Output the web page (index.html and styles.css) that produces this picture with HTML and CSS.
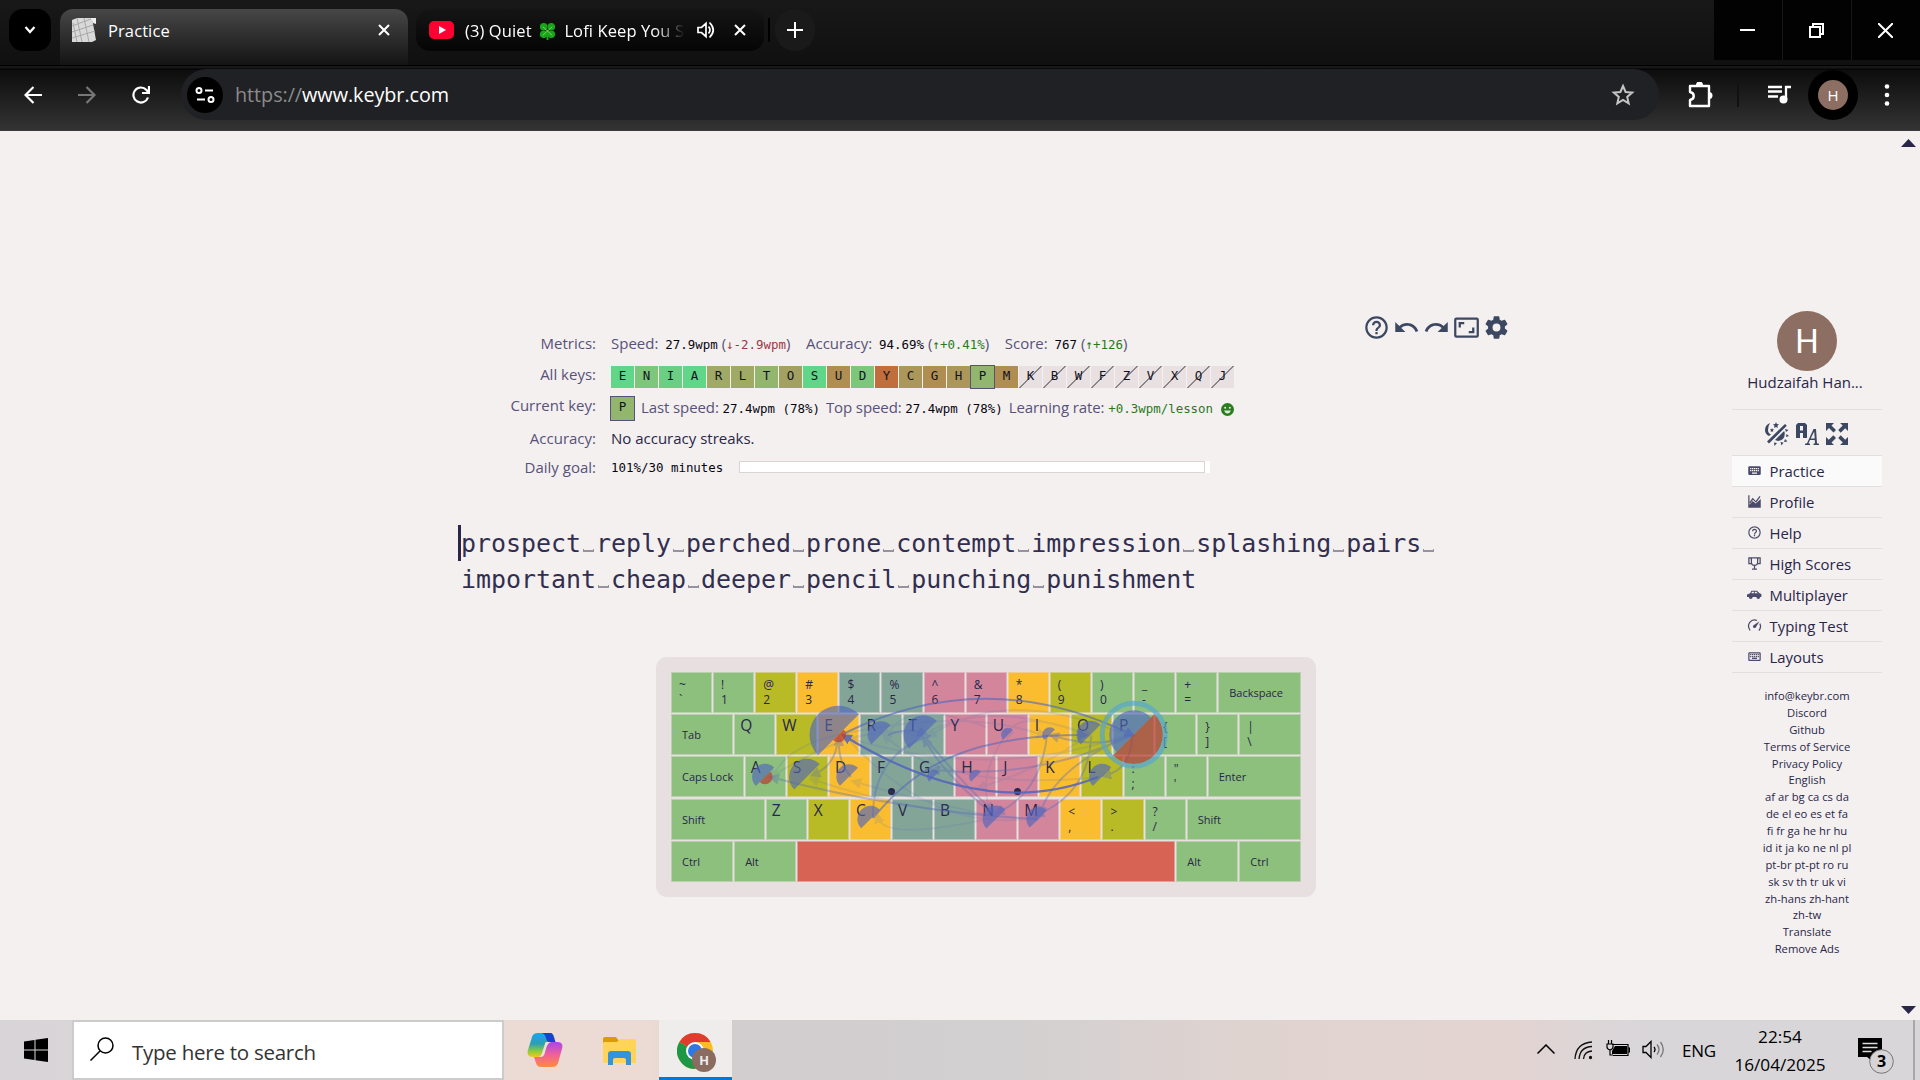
FILE: index.html
```html
<!DOCTYPE html>
<html lang="en">
<head>
<meta charset="utf-8">
<title>Practice</title>
<link rel="stylesheet" href="styles.css">
</head>
<body>
<div class="screen">
  <header class="tabstrip">
    <div class="tab-search"><svg width="14" height="14" viewBox="0 0 14 14"><path d="M2.500 4l4.500 5 4.500-5" fill="none" stroke="#fff" stroke-width="2.200"/></svg></div>
    <div class="tab active">
      <svg width="24" height="24" viewBox="0 0 24 24"><path d="M0 2L5 0H20L24 22 20 24H0Z" fill="#d9d9d9"/><path d="M0 8L19 1M0 14l21-7M0 20l23-7M5 0l5 24M12 0l5 24M1 5l4 19" stroke="#a8a8a8" stroke-width="1"/><path d="M19 0h5v6l-3-1z" fill="#eee"/></svg>
      <span class="tab-title">Practice</span>
      <svg class="close" width="12" height="12" viewBox="0 0 12 12"><path d="M1 1l10 10M11 1L1 11" stroke="#fff" stroke-width="2"/></svg>
    </div>
    <div class="tab other">
      <svg width="25" height="18" viewBox="0 0 25 18"><rect width="25" height="18" rx="5" fill="#ff0033"/><path d="M10 5l7 4-7 4z" fill="#fff"/></svg>
      <span class="tab-title lofi">(3) Quiet <svg width="19" height="19" viewBox="0 0 20 20"><g fill="#18a51c"><circle cx="6" cy="5" r="4"/><circle cx="14" cy="5" r="4"/><circle cx="6" cy="13" r="4"/><circle cx="14" cy="13" r="4"/><path d="M9 8h2v11H9z"/></g><path d="M5 5l10 9M15 5L5 14" stroke="#78d95a"/></svg> Lofi Keep You S</span>
      <svg class="speaker" width="18" height="18" viewBox="0 0 18 18" fill="none" stroke="#fff" stroke-width="1.700"><path d="M1 6.500h3.500L9 2.500v13l-4.500-4H1zM11.500 5.500q3 3.500 0 7M12.500 1.500q7.500 7.500 0 15"/></svg>
      <svg class="close" width="12" height="12" viewBox="0 0 12 12"><path d="M1 1l10 10M11 1L1 11" stroke="#fff" stroke-width="2"/></svg>
    </div>
    <i class="tab-sep"></i>
    <div class="new-tab"><svg width="16" height="16" viewBox="0 0 16 16"><path d="M8 0v16M0 8h16" stroke="#fff" stroke-width="2"/></svg></div>
    <div class="window-buttons">
      <div><svg width="15" height="15" viewBox="0 0 15 15"><path d="M0 7h15" stroke="#fff" stroke-width="2"/></svg></div>
      <div><svg width="15" height="15" viewBox="0 0 15 15" fill="none" stroke="#fff" stroke-width="2"><path d="M1 4h10v10H1zM4 4V1h10v10h-3"/></svg></div>
      <div><svg width="15" height="15" viewBox="0 0 15 15"><path d="M0 0l15 15M15 0L0 15" stroke="#fff" stroke-width="2"/></svg></div>
    </div>
  </header>

  <div class="toolbar">
    <svg class="nav" width="18" height="18" viewBox="0 0 18 18" fill="none" stroke="#fff" stroke-width="2.200"><path d="M18 9H2M9.500 1L1.500 9l8 8"/></svg>
    <svg class="nav" width="18" height="18" viewBox="0 0 18 18" fill="none" stroke="#777" stroke-width="2.200"><path d="M0 9h16M8.500 1l8 8-8 8"/></svg>
    <svg class="nav" width="18" height="18" viewBox="0 0 18 18" fill="none" stroke="#fff" stroke-width="2.200"><path d="M16 11.500A7.500 7.500 0 1 1 14.500 4l2 2.500M17 0v7h-7"/></svg>
    <div class="omnibox">
      <div class="site-info"><svg width="20" height="18" viewBox="0 0 20 18" fill="none" stroke="#fff" stroke-width="2"><circle cx="4" cy="4.500" r="2.500"/><path d="M10 4.500h8M2 13.500h8"/><circle cx="16" cy="13.500" r="2.500"/></svg></div>
      <span class="url"><span class="scheme">https://</span>www.keybr.com</span>
      <svg class="star" width="24" height="24" viewBox="0 0 24 24" fill="none" stroke="#c4c4c4" stroke-width="2"><path d="M12 3l2.600 6 6.600.600-5 4.300 1.500 6.500L12 17l-5.700 3.400 1.500-6.500-5-4.300L9.400 9z"/></svg>
    </div>
    <svg class="ext" width="26" height="26" viewBox="0 0 26 26"><path d="M3 4h19v20H3v-6c5-1 5-7 0-8z" fill="none" stroke="#fff" stroke-width="2.400" stroke-linejoin="round"/><path d="M9 3a3.500 3.500 0 0 1 7 0zM22 10a3.500 3.500 0 0 1 0 7z" fill="#fff"/></svg>
    <i class="bar-sep"></i>
    <svg class="media" width="24" height="19" viewBox="0 0 24 19"><path d="M0 2h14M0 6.500h14M0 11.500h10M23 2h-5v12" stroke="#fff" stroke-width="2.300" fill="none"/><circle cx="15.500" cy="14.500" r="4" fill="#fff"/></svg>
    <div class="profile"><span>H</span></div>
    <svg class="dots" width="6" height="24" viewBox="0 0 6 24" fill="#fff"><circle cx="3" cy="3.500" r="2.300"/><circle cx="3" cy="12" r="2.300"/><circle cx="3" cy="20.500" r="2.300"/></svg>
  </div>

  <main class="page">
    <section class="content">
      <div class="indicators">
        <div class="row metrics"><label>Metrics:</label><p>Speed: <b class="m1">27.9wpm</b><span class="par">(<b class="down">↓-2.9wpm</b>)</span></p><p class="second">Accuracy: <b class="m1">94.69%</b><span class="par">(<b class="up">↑+0.41%</b>)</span></p><p class="third">Score: <b class="m1">767</b><span class="par">(<b class="up">↑+126</b>)</span></p></div>
        <div class="row allkeys"><label>All keys:</label>
          <div class="tiles"><i class="k1">E</i><i class="k3">N</i><i class="k2">I</i><i class="k1">A</i><i class="k5">R</i><i class="k5">L</i><i class="k4">T</i><i class="k6">O</i><i class="k1">S</i><i class="k8">U</i><i class="k3">D</i><i class="k9">Y</i><i class="k7">C</i><i class="k8">G</i><i class="k7">H</i><i class="k4 sel">P</i><i class="k8">M</i><i class="off">K</i><i class="off">B</i><i class="off">W</i><i class="off">F</i><i class="off">Z</i><i class="off">V</i><i class="off">X</i><i class="off">Q</i><i class="off">J</i></div>
        </div>
        <div class="row current"><label>Current key:</label><i class="bigkey">P</i><p>Last speed: <b>27.4wpm (78%)</b></p><p class="top">Top speed: <b>27.4wpm (78%)</b></p><p class="rate">Learning rate: <b class="up">+0.3wpm/lesson</b></p>
          <svg class="smile" width="13" height="13" viewBox="0 0 13 13"><circle cx="6.500" cy="6.500" r="6.500" fill="#2a7d1f"/><circle cx="4.200" cy="4.800" r="1" fill="#f4f0ef"/><circle cx="8.800" cy="4.800" r="1" fill="#f4f0ef"/><path d="M3.200 7.500h6.600q-.8 3-3.300 3t-3.300-3z" fill="#dfe8dc"/></svg></div>
        <div class="row streak"><label>Accuracy:</label><p class="dark">No accuracy streaks.</p></div>
        <div class="row goal"><label>Daily goal:</label><b>101%/30 minutes</b><div class="meter"><div></div></div></div>
        <div class="controls">
          <svg viewBox="0 0 24 24"><path d="M11,18H13V16H11V18M12,2A10,10 0 0,0 2,12A10,10 0 0,0 12,22A10,10 0 0,0 22,12A10,10 0 0,0 12,2M12,20C7.59,20 4,16.41 4,12C4,7.59 7.59,4 12,4C16.41,4 20,7.59 20,12C20,16.41 16.41,20 12,20M12,6A4,4 0 0,0 8,10H10A2,2 0 0,1 12,8A2,2 0 0,1 14,10C14,12 11,11.75 11,15H13C13,12.75 16,12.5 16,10A4,4 0 0,0 12,6Z"/></svg>
          <svg viewBox="0 0 24 24"><path d="M12.5,8C9.85,8 7.45,9 5.6,10.6L2,7V16H11L7.38,12.38C8.77,11.22 10.54,10.5 12.5,10.5C16.04,10.5 19.05,12.81 20.1,16L22.47,15.22C21.08,11.03 17.15,8 12.5,8Z"/></svg>
          <svg viewBox="0 0 24 24"><path d="M18.4,10.6C16.55,9 14.15,8 11.5,8C6.85,8 2.92,11.03 1.54,15.22L3.9,16C4.95,12.81 7.95,10.5 11.5,10.5C13.45,10.5 15.23,11.22 16.62,12.38L13,16H22V7L18.4,10.6Z"/></svg>
          <svg viewBox="0 0 24 24"><path d="M19,12H17V15H14V17H19V12M7,9H10V7H5V12H7V9M21,3H3A2,2 0 0,0 1,5V19A2,2 0 0,0 3,21H21A2,2 0 0,0 23,19V5A2,2 0 0,0 21,3M21,19H3V5H21V19Z"/></svg>
          <svg viewBox="0 0 24 24"><path d="M12,15.5A3.5,3.5 0 0,1 8.5,12A3.5,3.5 0 0,1 12,8.5A3.5,3.5 0 0,1 15.5,12A3.5,3.5 0 0,1 12,15.5M19.43,12.97C19.47,12.65 19.5,12.33 19.5,12C19.5,11.67 19.47,11.34 19.43,11L21.54,9.37C21.73,9.22 21.78,8.95 21.66,8.73L19.66,5.27C19.54,5.05 19.27,4.96 19.05,5.05L16.56,6.05C16.04,5.66 15.5,5.32 14.87,5.07L14.5,2.42C14.46,2.18 14.25,2 14,2H10C9.75,2 9.54,2.18 9.5,2.42L9.13,5.07C8.5,5.32 7.96,5.66 7.44,6.05L4.95,5.05C4.73,4.96 4.46,5.05 4.34,5.27L2.34,8.73C2.21,8.95 2.27,9.22 2.46,9.37L4.57,11C4.53,11.34 4.5,11.67 4.5,12C4.5,12.33 4.53,12.65 4.57,12.97L2.46,14.63C2.27,14.78 2.21,15.05 2.34,15.27L4.34,18.73C4.46,18.95 4.73,19.03 4.95,18.95L7.44,17.94C7.96,18.34 8.5,18.68 9.13,18.93L9.5,21.58C9.54,21.82 9.75,22 10,22H14C14.25,22 14.46,21.82 14.5,21.58L14.87,18.93C15.5,18.67 16.04,18.34 16.56,17.94L19.05,18.95C19.27,19.03 19.54,18.95 19.66,18.73L21.66,15.27C21.78,15.05 21.73,14.78 21.54,14.63L19.43,12.97Z"/></svg>
        </div>
      </div>

      <div class="lesson"><i class="cursor"></i>
        <div>prospect<s></s>reply<s></s>perched<s></s>prone<s></s>contempt<s></s>impression<s></s>splashing<s></s>pairs<s></s></div>
        <div>important<s></s>cheap<s></s>deeper<s></s>pencil<s></s>punching<s></s>punishment</div>
      </div>

      <div class="keyboard">
        <div class="krow">
          <div class="key g two"><span>~</span><span>`</span></div><div class="key g two"><span>!</span><span>1</span></div><div class="key o two"><span>@</span><span>2</span></div><div class="key y two"><span>#</span><span>3</span></div><div class="key t two"><span>$</span><span>4</span></div><div class="key t two"><span>%</span><span>5</span></div><div class="key p two"><span>^</span><span>6</span></div><div class="key p two"><span>&amp;</span><span>7</span></div><div class="key y two"><span>*</span><span>8</span></div><div class="key o two"><span>(</span><span>9</span></div><div class="key g two"><span>)</span><span>0</span></div><div class="key g two"><span>_</span><span>-</span></div><div class="key g two"><span>+</span><span>=</span></div><div class="key g w200 mod">Backspace</div>
        </div>
        <div class="krow">
          <div class="key g w150 mod">Tab</div><div class="key g">Q</div><div class="key o">W</div><div class="key y">E</div><div class="key t">R</div><div class="key t">T</div><div class="key p">Y</div><div class="key p">U</div><div class="key y">I</div><div class="key o">O</div><div class="key g">P</div><div class="key g two"><span>{</span><span>[</span></div><div class="key g two"><span>}</span><span>]</span></div><div class="key g two w150"><span>|</span><span>\</span></div>
        </div>
        <div class="krow">
          <div class="key g w175 mod">Caps Lock</div><div class="key g">A</div><div class="key o">S</div><div class="key y">D</div><div class="key t home">F</div><div class="key t">G</div><div class="key p">H</div><div class="key p home">J</div><div class="key y">K</div><div class="key o">L</div><div class="key g two"><span>:</span><span>;</span></div><div class="key g two"><span>"</span><span>'</span></div><div class="key g w225 mod">Enter</div>
        </div>
        <div class="krow">
          <div class="key g w225 mod">Shift</div><div class="key g">Z</div><div class="key o">X</div><div class="key y">C</div><div class="key t">V</div><div class="key t">B</div><div class="key p">N</div><div class="key p">M</div><div class="key y two"><span>&lt;</span><span>,</span></div><div class="key o two"><span>&gt;</span><span>.</span></div><div class="key g two"><span>?</span><span>/</span></div><div class="key g w275 mod">Shift</div>
        </div>
        <div class="krow">
          <div class="key g w150 mod">Ctrl</div><div class="key g w150 mod">Alt</div><div class="key space w900"></div><div class="key g w150 mod">Alt</div><div class="key g w150 mod">Ctrl</div>
        </div>
        <svg class="heatmap" width="660" height="240" viewBox="0 0 660 240">
          <defs>
            <path id="half" d="M-.7071 .7071A1 1 0 0 1 .7071-.7071Z"/>
            <marker id="head" markerUnits="userSpaceOnUse" markerWidth="12" markerHeight="12" refX="5" refY="5.500" orient="auto"><path d="M0 0L11 5.500 0 11z" fill="#5166bd"/></marker>
          </defs>
          <g fill="none" stroke="#5166bd" stroke-width="2">
            <g opacity=".14">
              <path marker-end="url(#head)" d="M330 70Q250 40 232 78"/><path marker-end="url(#head)" d="M470 78Q350 28 275 78"/><path marker-end="url(#head)" d="M182 78Q130 90 118 118"/>
              <path marker-end="url(#head)" d="M445 120Q290 135 230 80"/><path marker-end="url(#head)" d="M340 160Q250 140 200 125"/><path marker-end="url(#head)" d="M340 160Q230 185 222 161"/>
              <path marker-end="url(#head)" d="M382 162Q270 160 158 123"/><path marker-end="url(#head)" d="M470 78Q340 125 196 82"/><path marker-end="url(#head)" d="M433 78Q360 50 352 78"/>
              <path marker-end="url(#head)" d="M267 78Q330 40 432 78"/><path marker-end="url(#head)" d="M182 78Q310 50 386 78"/><path marker-end="url(#head)" d="M115 120Q210 60 265 80"/>
              <path marker-end="url(#head)" d="M432 78Q390 110 325 130"/><path marker-end="url(#head)" d="M350 78Q320 120 335 155"/><path marker-end="url(#head)" d="M190 80Q280 180 382 160"/>
            </g>
            <g opacity=".34">
              <path marker-end="url(#head)" d="M217 161Q216 100 270 80"/><path marker-end="url(#head)" d="M382 162Q250 155 118 121"/>
              <path marker-end="url(#head)" d="M391 78Q385 135 343 155"/><path marker-end="url(#head)" d="M435 80Q433 135 383 157"/><path marker-end="url(#head)" d="M476 80Q475 112 450 118"/>
              <path marker-end="url(#head)" d="M474 78Q400 110 385 154"/><path marker-end="url(#head)" d="M340 160Q285 115 270 84"/><path marker-end="url(#head)" d="M267 78Q305 125 335 152"/>
              <path marker-end="url(#head)" d="M474 79Q380 123 279 113"/><path marker-end="url(#head)" d="M195 120Q182 105 183 84"/><path marker-end="url(#head)" d="M182 80Q181 107 159 117"/>
              <path marker-end="url(#head)" d="M232 78Q250 70 267 76"/><path marker-end="url(#head)" d="M476 79Q440 92 398 79"/>
            </g>
            <path opacity=".55" marker-end="url(#head)" d="M217 161C260 110 310 78 427 78"/>
            <path opacity=".6" marker-end="url(#head)" d="M189 76Q330 7 474 77"/>
            <path opacity=".85" stroke-width="2.300" marker-end="url(#head)" d="M442 120Q330 165 190 80"/>
          </g>
          <g fill="#5166bd" opacity=".64">
            <use href="#half" transform="translate(182.400 77.700)scale(29)"/><use href="#half" transform="translate(225 77.700)scale(13.500)"/><use href="#half" transform="translate(267 77.700)scale(19.500)"/>
            <use href="#half" transform="translate(352 77.700)scale(7)"/><use href="#half" transform="translate(393.700 77.700)scale(7.500)"/><use href="#half" transform="translate(434.500 77.700)scale(14)"/><use href="#half" transform="translate(477.700 77.700)scale(24.500)"/>
            <use href="#half" transform="translate(109 119.800)scale(13)"/><use href="#half" transform="translate(151 119.800)scale(18)"/><use href="#half" transform="translate(193 119.800)scale(12.700)"/><use href="#half" transform="translate(278 119.800)scale(7)"/><use href="#half" transform="translate(320 119.800)scale(7)"/><use href="#half" transform="translate(446 119.800)scale(13)"/>
            <use href="#half" transform="translate(214.500 162)scale(13.200)"/><use href="#half" transform="translate(340 162)scale(13.500)"/><use href="#half" transform="translate(382.300 162)scale(12)"/>
          </g>
          <g fill="#b83c36" opacity=".72"><use href="#half" transform="translate(182.400 77.700)rotate(180)scale(7.500)"/><use href="#half" transform="translate(109 119.800)rotate(180)scale(7.500)"/><use href="#half" transform="translate(477.700 77.700)rotate(180)scale(29.300)"/></g>
          <circle cx="477.700" cy="77.700" r="31.500" fill="none" stroke="#55a5d0" stroke-width="5" opacity=".68"/>
        </svg>
      </div>
    </section>

    <aside class="sidebar">
      <div class="avatar">H</div>
      <div class="user">Hudzaifah Han...</div>
      <div class="prefs">
        <svg viewBox="0 0 24 24"><path d="M5 1Q0 3 0 8q0 4 4 6l2-1.500Q3 11 3 8q0-4 2-7zM11 0l.8 2 2.200.3-1.600 1.500.4 2.200-1.800-1-1.900 1 .4-2.200L8 2.300l2.200-.3zM7 6l.5 1.300 1.500.2-1 1 .2 1.500L7 9.300l-1.300.7.2-1.500-1-1 1.500-.2zM20 2l1.800 1.800L4 21.500l-2-2zM19.500 9.500Q21 18 13 19l-3-1 8.500-8.500zM20 7l3.500 1-2.500 2zM21.500 12l2.500 2-3 1zM20 17l2.500 2.500-3.500.5zM15.500 20l1 3.500 2-3zM9 20.500l.5 3.500 2.500-3z"/></svg>
        <svg viewBox="0 0 24 24"><path fill-rule="evenodd" d="M1 16V3l2-2h7l2 2v13H8v-5H5v5zM5 4v4.500h3V4zM10 23v-1.200l2-.5L18.500 7H21l1 14.300 2 .5V23h-5.500v-1.200l1.500-.5-.3-3.300H15l-1.500 3.300 1.500.5V23zM15.700 16.500h4l-.5-7z"/></svg>
        <svg viewBox="0 0 24 24"><path d="M1 1h8L6.500 3.500l4.500 4.500-2.500 2.500L4 6 1 9zM23 1v8l-2.800-2.800-4.500 4.500L13.200 8l4.500-4.500L15 1zM1 23v-8l2.800 2.800 4.500-4.500L11 16l-4.500 4.500L9 23zM23 23h-8l2.800-2.500L13.200 16l2.500-2.700 4.500 4.500L23 15z"/></svg>
      </div>
      <nav class="menu">
        <a class="on"><svg viewBox="0 0 24 24"><path d="M19,10H17V8H19M19,13H17V11H19M16,10H14V8H16M16,13H14V11H16M16,17H8V15H16M7,10H5V8H7M7,13H5V11H7M8,11H10V13H8M8,8H10V10H8M11,11H13V13H11M11,8H13V10H11M20,5H4C2.89,5 2,5.89 2,7V17A2,2 0 0,0 4,19H20A2,2 0 0,0 22,17V7C22,5.89 21.1,5 20,5Z"/></svg>Practice</a>
        <a><svg viewBox="0 0 24 24"><path d="M2 2h2v15l5-6 5 4 8-7v14H2zM4 13l5-7 5 5 6-8 1.600 1.200L14.500 14 9.500 9 5 15z"/></svg>Profile</a>
        <a><svg viewBox="0 0 24 24"><path d="M11,18H13V16H11V18M12,2A10,10 0 0,0 2,12A10,10 0 0,0 12,22A10,10 0 0,0 22,12A10,10 0 0,0 12,2M12,20C7.59,20 4,16.41 4,12C4,7.59 7.59,4 12,4C16.41,4 20,7.59 20,12C20,16.41 16.41,20 12,20M12,6A4,4 0 0,0 8,10H10A2,2 0 0,1 12,8A2,2 0 0,1 14,10C14,12 11,11.75 11,15H13C13,12.75 16,12.5 16,10A4,4 0 0,0 12,6Z"/></svg>Help</a>
        <a><svg viewBox="0 0 24 24"><path fill="none" stroke="#4c4a6b" stroke-width="2" d="M7 3h10v7q0 5-5 5t-5-5zM7 5L6 3H3v9h5M17 5l1-2h3v9h-5M12 15v5M8 21h8"/></svg>High Scores</a>
        <a><svg viewBox="0 0 24 24"><path fill-rule="evenodd" d="M5 10l2-4h9l4 4 3 1v5h-2a3 3 0 0 1-6 0H9a3 3 0 0 1-6 0H0v-4zM8 7.500L7 10h4V7.500zM12.500 7.500V10H17l-2-2.500z"/></svg>Multiplayer</a>
        <a><svg viewBox="0 0 24 24"><path fill="none" stroke="#4c4a6b" stroke-width="2" d="M5 20Q0 13 4.500 7T16 4M20.500 9q3 6-1.500 11"/><path d="M20 5l-6 10a2.500 2.500 0 0 1-4-3z"/></svg>Typing Test</a>
        <a><svg viewBox="0 0 24 24"><path d="M4,5A2,2 0 0,0 2,7V17A2,2 0 0,0 4,19H20A2,2 0 0,0 22,17V7A2,2 0 0,0 20,5H4M4,7H20V17H4V7M5,8V10H7V8H5M8,8V10H10V8H8M11,8V10H13V8H11M14,8V10H16V8H14M17,8V10H19V8H17M5,11V13H7V11H5M8,11V13H10V11H8M11,11V13H13V11H11M14,11V13H16V11H14M17,11V13H19V11H17M8,14V16H16V14H8Z"/></svg>Layouts</a>
      </nav>
      <div class="links"><div>info@keybr.com</div><div>Discord</div><div>Github</div><div>Terms of Service</div><div>Privacy Policy</div><div>English</div><div>af ar bg ca cs da</div><div>de el eo es et fa</div><div>fi fr ga he hr hu</div><div>id it ja ko ne nl pl</div><div>pt-br pt-pt ro ru</div><div>sk sv th tr uk vi</div><div>zh-hans zh-hant</div><div>zh-tw</div><div>Translate</div><div>Remove Ads</div></div>
    </aside>
    <div class="scroll">
      <svg width="15" height="8" viewBox="0 0 15 8"><path d="M0 8L7.500 0 15 8z" fill="#29264a"/></svg>
      <svg width="15" height="8" viewBox="0 0 15 8"><path d="M0 0l7.500 8L15 0z" fill="#29264a"/></svg>
    </div>
  </main>

  <footer class="taskbar">
    <div class="start"><svg width="24" height="24" viewBox="0 0 24 24"><path d="M0 3.500l10.500-1.500v9.500H0zM11.500 1.800L24 0v11.500H11.500zM0 12.500h10.500V22L0 20.500zM11.500 12.500H24V24l-12.500-1.800z"/></svg></div>
    <div class="search"><svg width="24" height="24" viewBox="0 0 24 24" fill="none" stroke="#000" stroke-width="1.500"><circle cx="15.500" cy="8.500" r="7.500"/><path d="M10 14L0.500 23.500"/></svg><span>Type here to search</span></div>
    <div class="app"><svg width="36" height="34" viewBox="0 0 36 34">
      <defs><linearGradient id="ca" x1="0" y1="0" x2="0" y2="1"><stop offset="0" stop-color="#1ba5ef"/><stop offset=".45" stop-color="#2b9fb4"/><stop offset=".75" stop-color="#8ccb3c"/><stop offset="1" stop-color="#f4c81b"/></linearGradient><linearGradient id="cb" x1="0" y1="0" x2="0" y2="1"><stop offset="0" stop-color="#a548e8"/><stop offset=".5" stop-color="#f0609a"/><stop offset="1" stop-color="#ff8a3c"/></linearGradient></defs>
      <path d="M22 0h3l1 9h-5l-4 11q-1.500 4-5 4H6q-7 0-5-7L5 4q1-4 6-4z" fill="url(#ca)"/><path d="M15 0h8q3 0 4 4l1.500 5H22q-2 0-3-4-1-4-4-5z" fill="#1743c8"/><path d="M14 34q-4 0-5-4l-2-6h5q3 0 4-4l2-7q1.500-4 5-4h7q7 0 5 7l-4 14q-1 4-6 4z" fill="url(#cb)"/><path d="M18.500 9H24q-3 1-4.500 5l-2 7q-1 3-4 3H12q2-1 3-4z" fill="#efdfd8"/></svg></div>
    <div class="app files"><svg width="33" height="28" viewBox="0 0 33 28"><path d="M0 2q0-2 2-2h11l3 4v6H0z" fill="#d99b09"/><path d="M1 5h13l3-3h14q2 0 2 2v22H2q-2 0-2-2V6z" fill="#ffd459"/><path d="M5 28V17q0-3 3-3h17q3 0 3 3v11h-5v-5q0-2-2-2h-9q-2 0-2 2v5z" fill="#3493dd"/></svg></div>
    <div class="app chrome"><svg width="40" height="42" viewBox="0 0 40 42"><circle cx="18" cy="19" r="18" fill="#f9bd1e"/><path d="M18 19L2.400 10A18 18 0 0 1 33.600 10H18z" fill="#df3b2f"/><path d="M2.400 10A18 18 0 0 0 18 37l8-14-8-4z" fill="#1e9747"/><circle cx="18" cy="19" r="9" fill="#fff"/><circle cx="18" cy="19" r="7" fill="#2c78e4"/><circle cx="27" cy="28" r="12" fill="#8a6c61"/><text x="27" y="33" text-anchor="middle">H</text></svg></div>
    <div class="tray">
      <svg class="chev" width="18" height="10" viewBox="0 0 18 10"><path d="M.5 9.500L9 1l8.500 8.500" fill="none" stroke="#000" stroke-width="1.500"/></svg>
      <svg class="wifi" width="19" height="19" viewBox="0 0 19 19" fill="none" stroke="#111" stroke-width="1.300"><path d="M1 18Q2 2 18 1M5 18Q6 6 18 5.500M9.500 18Q10 10.500 18 10"/><circle cx="16.500" cy="16.500" r="1" fill="#000"/></svg>
      <svg class="batt" width="24" height="17" viewBox="0 0 24 17"><path d="M6 4.500h16v11H7M22 8h1.500v4H22M1 4h6v3q0 2-3 3-3-1-3-3zM2.500 0v4M5.500 0v4M4 10v5h3" fill="none" stroke="#000" stroke-width="1.200"/><path d="M9 6h12v8H6v-3z"/></svg>
      <svg class="vol" width="23" height="19" viewBox="0 0 23 19" fill="none" stroke="#000" stroke-width="1.300"><path d="M1 6.500h3L9 1.500v16l-5-5H1zM12 7q2 2.500 0 5"/><path stroke="#777" d="M15 4.500q4 5 0 10M18.500 2q5.500 7.500 0 15"/></svg>
      <span class="lang">ENG</span>
      <div class="clock"><span>22:54</span><span>16/04/2025</span></div>
      <svg class="notif" width="36" height="38" viewBox="0 0 36 38"><path d="M0 1h24v19H14v4L9 20H0z"/><path d="M4.500 6.500h15M4.500 10.500h15M4.500 14.500h9" stroke="#ddd" stroke-width="1.300"/><circle cx="23.500" cy="24.500" r="11.800" fill="#d6d4d6" stroke="#777"/><text x="23.500" y="30" text-anchor="middle">3</text></svg>
      <i class="desk"></i>
    </div>
  </footer>
</div>
</body>
</html>
```
FILE: styles.css
```css
* { box-sizing: border-box; }
body { margin: 0; font-family: "Open Sans", "Noto Sans", sans-serif; }
svg { display: block; flex: none; }
p { margin: 0; }
i, s { font-style: normal; text-decoration: none; }
.screen { width: 1920px; height: 1080px; display: flex; flex-direction: column; overflow: hidden; background: #f4f0ef; }

/* tab strip */
.tabstrip { height: 66px; flex: none; display: flex; align-items: flex-start; padding: 9px 0 0 9px; background: linear-gradient(#181818, #101010); color: #fff; border-bottom: 1px solid #000; }
.tab-search { width: 42px; height: 42px; border-radius: 14px; background: #000; display: flex; align-items: center; justify-content: center; }
.tab { display: flex; align-items: center; width: 348px; }
.tab.active { height: 56px; margin-left: 9px; padding: 0 18px 14px 12px; border-radius: 13px 13px 0 0; background: linear-gradient(#474747, #141414); }
.tab-title { font-size: 16.500px; line-height: 24px; letter-spacing: .1px; margin-left: 12px; padding-top: 2px; white-space: nowrap; }
.tab .close { margin-left: auto; }
.tab.other { height: 42px; margin-left: 8px; padding: 0 18px 0 13px; border-radius: 14px; background: linear-gradient(#151515, #050505); }
.tab-title.lofi { width: 220px; overflow: hidden; margin-left: 11px; -webkit-mask-image: linear-gradient(90deg, #000 86%, transparent); mask-image: linear-gradient(90deg, #000 86%, transparent); }
.lofi svg { display: inline-block; vertical-align: -4px; margin: 0 3px 0 2px; }
.speaker { margin-left: 12px; }
.tab-sep { width: 2px; height: 24px; background: #000; margin: 9px 0 0 4px; }
.new-tab { width: 40px; height: 42px; margin-left: 5px; border-radius: 20px; background: #1a1a1a; display: flex; align-items: center; justify-content: center; }
.window-buttons { display: flex; gap: 1px; margin: -9px 0 0 auto; height: 60px; background: #161616; }
.window-buttons div { width: 68px; padding-right: 1px; background: #020202; display: flex; align-items: center; justify-content: center; }

/* address bar */
.toolbar { height: 65px; flex: none; display: flex; align-items: center; padding: 3px 0 11px 24px; background: linear-gradient(#181818 2px, #000 3px, #0d0d0d 4px, #333 64px, #444 65px); }
.nav { margin-right: 36px; }
.omnibox { width: 1478px; height: 51px; margin-left: -5px; border-radius: 26px; background: #202124; display: flex; align-items: center; padding: 0 24px 0 6px; }
.site-info { width: 36px; height: 36px; border-radius: 50%; background: #000; display: flex; align-items: center; justify-content: center; }
.url { font-size: 19.800px; color: #fff; margin-left: 12px; letter-spacing: -.05px; line-height: 48px; }
.scheme { color: #8b8b8b; }
.star { margin-left: auto; }
.ext { margin-left: 28px; }
.bar-sep { width: 2px; height: 24px; background: #111; margin-left: 24px; }
.media { margin-left: 29px; }
.profile { width: 50px; height: 50px; margin-left: 16px; border-radius: 50%; background: #000; display: flex; align-items: center; justify-content: center; }
.profile span { width: 30px; height: 30px; border-radius: 50%; background: #8d6e63; color: #fff; font: 15px/30px "Open Sans", sans-serif; text-align: center; }
.dots { margin-left: 26px; }

/* page */
.page { height: 889px; flex: none; display: flex; padding-left: 461px; position: relative; background: #f4f0ef; color: #29264a; }
.content { width: 1050px; padding-top: 196px; display: flex; flex-direction: column; }
.indicators { position: relative; height: 199px; font-size: 15px; color: #575279; }
.row { display: flex; white-space: pre; align-items: center; }
.row label { width: 135px; text-align: right; margin-right: 15px; flex: none; }
.row b { font: 12.450px "DejaVu Sans Mono", monospace; color: #050510; }
.row b.up { color: #287a1b; }
.row b.down { color: #a03544; }
.row .m1 { margin-left: 3px; }
.par { margin-left: 4px; }
.metrics { height: 32px; }
.second, .third { margin-left: 15.500px; }
.allkeys { height: 32px; align-items: flex-start; padding-top: 7px; }
.allkeys label { line-height: 16px; }
.tiles { display: flex; gap: 1px; }
.tiles i { width: 23px; height: 22px; font: 12.500px/20px "DejaVu Sans Mono", monospace; color: #111122; text-align: center; }
.k1 { background: #60d788; } .k2 { background: #6bcf83; } .k3 { background: #7cc77c; } .k4 { background: #93b66f; } .k5 { background: #a0a966; } .k6 { background: #a3a161; } .k7 { background: #ab9759; } .k8 { background: #b08e51; } .k9 { background: #bf6e3c; }
.sel { outline: 1px solid #575279; z-index: 1; }
.tiles .off { background: linear-gradient(135deg, transparent calc(50% - .7px), #89858d calc(50% - .5px), #89858d calc(50% + .5px), transparent calc(50% + .7px)), #e9e1e1; }
.current { height: 30px; align-items: flex-start; }
.current label { line-height: 28px; }
.current p { line-height: 33px; letter-spacing: -.1px; }
.current p b { letter-spacing: 0; }
.bigkey { width: 25px; height: 25px; margin: 5px 6px 0 -1px; border: 1px solid #575279; background: #93b66f; font: 12.500px/20px "DejaVu Sans Mono", monospace; color: #111122; text-align: center; }
.top, .rate { margin-left: 6px; }
.smile { margin: 12px 0 0 8px; }
.streak { height: 34px; }
.dark { color: #29264a; }
.goal { height: 24px; }
.meter { margin-left: 16px; width: 471px; height: 12px; background: #fff; }
.meter div { width: 466px; height: 12px; border: 1px solid #dcd3d5; }
.controls { position: absolute; right: 1px; top: -13px; display: flex; gap: 3px; }
.controls svg { width: 27px; height: 27px; fill: #3c4862; }

/* lesson text */
.lesson { position: relative; height: 131px; font: 24.930px/36px "DejaVu Sans Mono", monospace; color: #312e50; white-space: nowrap; }
.cursor { position: absolute; left: -3px; top: -1px; width: 3px; height: 36px; background: #29264a; }
.lesson s { display: inline-block; width: 11px; height: 3px; margin: 0 2px; border: 1px solid #96939f; border-bottom-width: 2px; border-top: 0; }

/* keyboard */
.keyboard { position: relative; width: 660px; height: 240px; align-self: center; padding: 15px; border-radius: 11px; background: #e8e0e0; display: flex; flex-direction: column; gap: 1.200px; }
.krow { display: flex; gap: 1px; }
.key { width: 41.100px; height: 41px; flex: none; border: 1px solid rgba(232, 224, 224, .5); font-size: 15.500px; line-height: 21px; padding-left: 5px; color: #29264a; position: relative; }
.two { font-size: 12px; line-height: 15px; padding: 4px 0 0 7px; }
.two span { display: block; }
.mod { font-size: 11px; line-height: 39px; padding-left: 10px; }
.w150 { width: 62.150px; } .w175 { width: 72.700px; } .w200 { width: 83.200px; } .w225 { width: 93.700px; } .w275 { width: 114.700px; } .w900 { width: 377.900px; }
.g { background: #8dc07c; } .o { background: #b8bb26; } .y { background: #fabd2f; } .t { background: #83a598; } .p { background: #d3869b; } .space { background: #d66353; }
.home::after { content: ""; position: absolute; left: 16px; top: 31px; width: 7px; height: 7px; border-radius: 50%; background: #29264a; }
.heatmap { position: absolute; left: 0; top: 0; }

/* sidebar */
.sidebar { width: 150px; margin-left: 221px; padding-top: 180px; text-align: center; }
.avatar { width: 60px; height: 60px; margin: 0 auto; border-radius: 50%; background: #8d6e63; color: #fff; font: 33px/62px Roboto, sans-serif; }
.user { height: 39px; font-size: 15px; line-height: 23px; border-bottom: 1px solid #e4dedf; padding-right: 4px; white-space: nowrap; }
.prefs { height: 46px; padding-top: 2px; display: flex; gap: 6px; justify-content: center; align-items: center; border-bottom: 1px solid #e4dedf; }
.prefs svg { width: 24px; height: 24px; fill: #3c4862; }
.menu a { display: flex; align-items: center; height: 31px; padding: 0 0 1px 15px; border-bottom: 1px solid #e4dedf; font-size: 14.900px; }
.menu .on { background: #fafafa; }
.menu svg { width: 15px; height: 15px; margin: 0 7.500px 1px 0; fill: #4c4a6b; }
.links { padding-top: 15px; font-size: 11.250px; line-height: 16.880px; white-space: nowrap; }
.scroll { position: absolute; right: 4px; top: 8px; height: 875px; display: flex; flex-direction: column; justify-content: space-between; }

/* taskbar */
.taskbar { height: 60px; flex: none; display: flex; background: linear-gradient(90deg, #d8d5d8 0, #dcd5d6 400px, #ebdbd4 510px, #ebdbd4 650px, #d2cdce 735px, #d2d0d1 1000px, #dfd3d0 1250px, #e3d4d1 1500px, #d9d6da 1640px, #d8d6d9 1920px); color: #000; }
.start { width: 72px; padding: 18px 0 0 24px; }
.search { width: 432px; background: #fff; border: 2px solid #ccc; display: flex; align-items: center; padding: 3px 0 0 16px; font-size: 20.500px; color: #333; letter-spacing: -.25px; }
.search svg { margin: -5px 18px 0 0; }
.app { width: 78px; padding: 13px 0 0 23px; }
.files { width: 77px; padding: 17px 0 0 21px; }
.chrome { width: 73px; background: #efedec; border-bottom: 3px solid #0078d7; padding: 12px 0 0 18px; }
.chrome text { font: bold 13px Roboto, sans-serif; fill: #eee; }
.tray { margin-left: auto; width: 383px; display: flex; align-items: flex-start; }
.chev { margin-top: 24px; }
.wifi { margin: 21px 0 0 19px; }
.batt { margin: 20px 0 0 13px; }
.vol { margin: 20px 0 0 12px; }
.lang { font-size: 17px; line-height: 62px; margin-left: 17px; letter-spacing: -.2px; width: 35px; }
.clock { width: 96px; margin-left: 15px; display: flex; flex-direction: column; align-items: center; font-size: 17.200px; line-height: 28px; padding-top: 3px; white-space: nowrap; }
.notif { margin: 17px 0 0 30px; }
.notif text { font: bold 16px "Open Sans", sans-serif; }
.desk { width: 2px; height: 60px; background: #a9a7a9; margin-left: 19px; }
```
